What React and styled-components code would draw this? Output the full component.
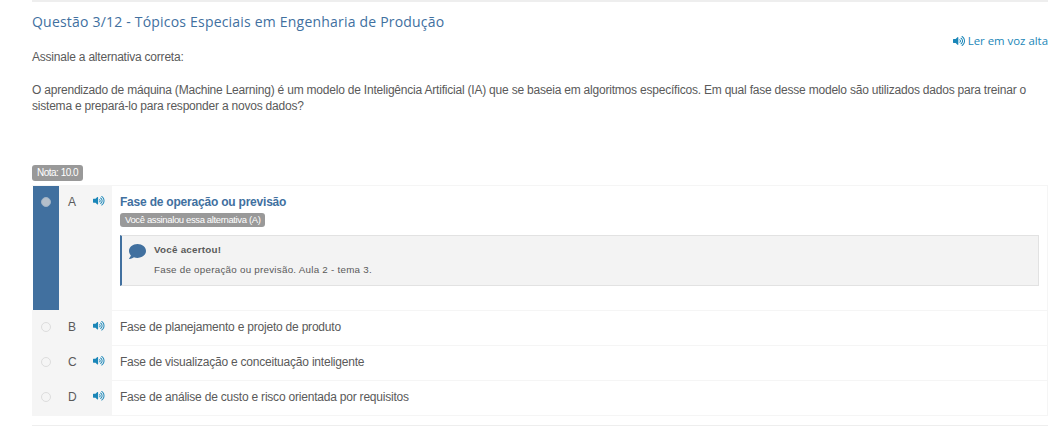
import React from 'react'
import styled, { createGlobalStyle } from 'styled-components'
import { FaVolumeUp, FaComment } from 'react-icons/fa'

const GlobalStyle = createGlobalStyle`
  html, body { margin: 0; padding: 0; background: #fff; }
  body { font-family: "Liberation Sans", Arial, sans-serif; font-size: 12px; letter-spacing: -0.21px; color: #5a5a5a; overflow: hidden; }
`

const Page = styled.div`
  width: 1016px;
  height: 435px;
  margin-left: 32px;
  border-top: 2px solid #eee;
  box-sizing: border-box;
`

const Title = styled.h2`
  margin: 0;
  padding-top: 11px;
  font: 400 14px/17px "Open Sans", sans-serif;
  letter-spacing: 0.2px;
  color: #41709f;
`

const ReadAloud = styled.div`
  display: flex;
  justify-content: flex-end;
  align-items: center;
  gap: 3px;
  height: 14px;
  margin-top: 4px;
  font: 400 11.4px/14px "Open Sans", sans-serif;
  letter-spacing: 0;
  color: #1a86b8;
`

const Statement = styled.p`
  margin: 2px 0 0;
  height: 14px;
  line-height: 14px;
`

const Paragraph = styled.p`
  margin: 18px 0 0;
  line-height: 16px;
`

const Badge = styled.span`
  display: block;
  width: fit-content;
  background: #999;
  color: #fff;
  border-radius: 3px;
  font-size: ${p => p.$size}px;
  letter-spacing: ${p => p.$spacing}px;
  line-height: ${p => p.$height}px;
  padding: 0 5px;
`

const GradeRow = styled.div`
  margin-top: 51px;
`

const List = styled.div`
  margin-top: 4px;
  border: 1px solid #f5f5f5;
  border-left: 0;
`

const Row = styled.div`
  display: flex;
  height: ${p => p.$height}px;
  border-bottom: ${p => p.$last ? 0 : '1px solid #f5f5f5'};
`

const Marker = styled.div`
  width: ${p => p.$active ? 26 : 27}px;
  margin-left: ${p => p.$active ? 1 : 0}px;
  padding-top: 11px;
  box-sizing: border-box;
  display: flex;
  justify-content: center;
  align-items: flex-start;
  background: ${p => p.$active ? '#41709f' : '#f5f5f5'};
`

const Radio = styled.span`
  width: 10px;
  height: 10px;
  box-sizing: border-box;
  border-radius: 50%;
  background: ${p => p.$checked ? '#b4bfcb' : '#f5f5f5'};
  border: 1px solid ${p => p.$checked ? '#9fb2c6' : '#ddd'};
`

const LetterCell = styled.div`
  width: 53px;
  box-sizing: border-box;
  padding: 9px 0 0 9px;
  display: flex;
  align-items: flex-start;
  background: #f5f5f5;
  font-size: 12px;
  letter-spacing: 0;
  line-height: 14px;
`

const Letter = styled.span`
  width: 25px;
`

const SoundIcon = styled.span`
  display: flex;
  align-items: center;
  height: 14px;
  margin-top: -1px;
  color: #1a86b8;
  font-size: 11.5px;
`

const Body = styled.div`
  flex: 1;
  min-width: 0;
  padding: 9px 8px 0 8px;
  line-height: 14px;
`

const AnswerTitle = styled.div`
  font-weight: 700;
  color: #41709f;
  margin-bottom: 4px;
`

const Feedback = styled.div`
  display: flex;
  gap: 8px;
  height: 51px;
  box-sizing: border-box;
  margin-top: 8px;
  padding: 7px 0 0 7px;
  background: #f3f3f3;
  border: 1px solid #e2e2e2;
  border-left: 2px solid #41709f;
  font-size: 9.8px;
  letter-spacing: 0.25px;
`

const FeedbackIcon = styled.span`
  color: #41709f;
  font-size: 17px;
  line-height: 0;
`

const FeedbackTitle = styled.div`
  font-weight: 700;
  margin-bottom: 6px;
`

const BottomRule = styled.div`
  margin-top: 9px;
  border-top: 1px solid #eee;
`

const options = [
  { letter: 'B', text: 'Fase de planejamento e projeto de produto' },
  { letter: 'C', text: 'Fase de visualização e conceituação inteligente' },
  { letter: 'D', text: 'Fase de análise de custo e risco orientada por requisitos' },
]

export default function App() {
  return (
    <Page>
      <GlobalStyle />
      <Title>Questão 3/12 - Tópicos Especiais em Engenharia de Produção</Title>
      <ReadAloud><FaVolumeUp size={12} />Ler em voz alta</ReadAloud>
      <Statement>Assinale a alternativa correta:</Statement>
      <Paragraph>
        O aprendizado de máquina (Machine Learning) é um modelo de Inteligência Artificial (IA) que se baseia em algoritmos específicos. Em qual fase desse modelo são utilizados dados para treinar o sistema e prepará-lo para responder a novos dados?
      </Paragraph>
      <GradeRow><Badge $size={10} $spacing={-0.5} $height={16}>Nota: 10.0</Badge></GradeRow>
      <List>
        <Row $height={124}>
          <Marker $active><Radio $checked /></Marker>
          <LetterCell>
            <Letter>A</Letter>
            <SoundIcon><FaVolumeUp /></SoundIcon>
          </LetterCell>
          <Body>
            <AnswerTitle>Fase de operação ou previsão</AnswerTitle>
            <Badge $size={9.5} $spacing={-0.37} $height={14}>Você assinalou essa alternativa (A)</Badge>
            <Feedback>
              <FeedbackIcon><FaComment /></FeedbackIcon>
              <div>
                <FeedbackTitle>Você acertou!</FeedbackTitle>
                <div>Fase de operação ou previsão. Aula 2 - tema 3.</div>
              </div>
            </Feedback>
          </Body>
        </Row>
        {options.map((o, i) => (
          <Row key={o.letter} $height={34} $last={i === options.length - 1}>
            <Marker><Radio /></Marker>
            <LetterCell>
              <Letter>{o.letter}</Letter>
              <SoundIcon><FaVolumeUp /></SoundIcon>
            </LetterCell>
            <Body>{o.text}</Body>
          </Row>
        ))}
      </List>
      <BottomRule />
    </Page>
  )
}
